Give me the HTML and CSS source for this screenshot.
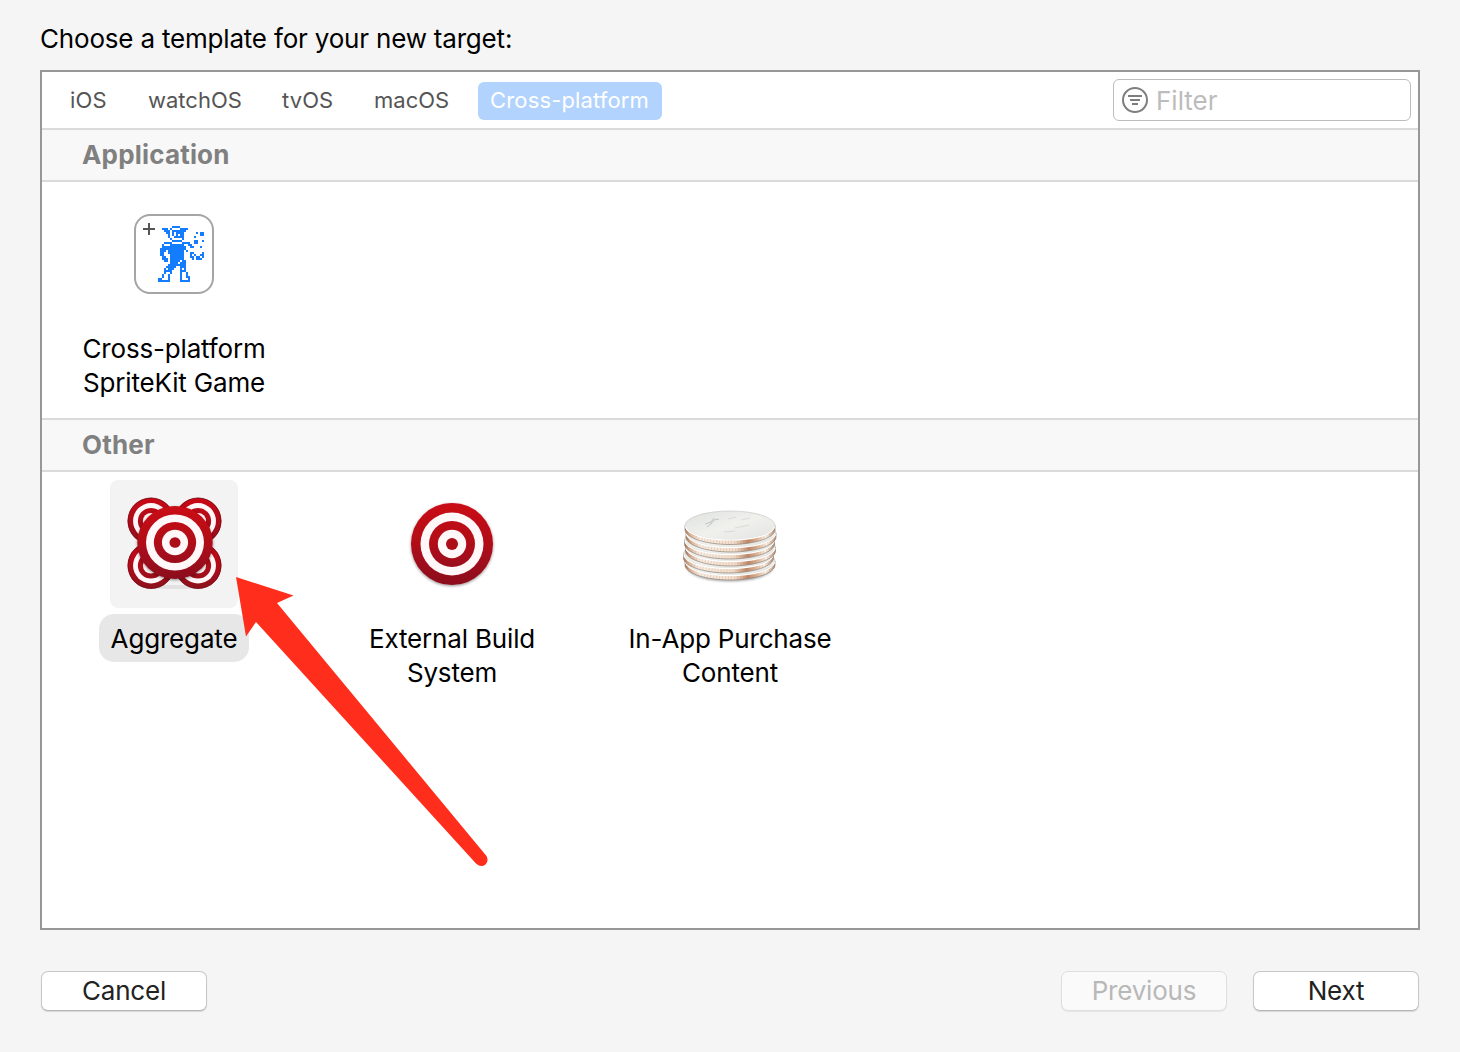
FILE: index.html
```html
<!DOCTYPE html>
<html lang="en">
<head>
<meta charset="utf-8">
<title>Choose a template</title>
<link rel="stylesheet" href="styles.css">
</head>
<body>
<main class="dialog">
  <h1 class="title">Choose a template for your new target:</h1>
  <section class="panel">
    <nav class="tabs">
      <span class="tab t-ios">iOS</span>
      <span class="tab t-watch">watchOS</span>
      <span class="tab t-tv">tvOS</span>
      <span class="tab t-mac">macOS</span>
      <span class="tab active">Cross-platform</span>
      <div class="filter">
        <svg width="26" height="26" viewBox="0 0 26 26" fill="none" stroke="#7e7e7e" stroke-width="2"><circle cx="13" cy="13" r="12"/><path d="M6 9h14M8 13h10M10 17h6"/></svg>
        <span>Filter</span>
      </div>
    </nav>
    <h2 class="section-title">Application</h2>
    <div class="grid applications">
      <div class="item">
        <div class="icon">
          <svg width="80" height="80" viewBox="0 0 80 80">
            <rect x="1" y="1" width="78" height="78" rx="15" fill="#fff" stroke="#a5a5a5" stroke-width="2"/>
            <path d="M9 15h12M15 9v12" stroke="#555" stroke-width="2"/>
            <g transform="translate(24 12) scale(2)" stroke="#147dff" stroke-width="1" fill="none" shape-rendering="crispEdges">
              <path d="M7 .5h4M2 1.5h3m1 0h1m4 0h4M3 2.5h3m1 0h7M4 3.5h2m1 0h1m1 0h4M5 4.5h1m1 0h1m1 0h1m1 0h2M5 5.5h1m2 0h5M6 6.5h1m5 0h1M7 7.5h5M3 8.5h4m5 0h4M2 9.5h1m3 0h7m2 0h2M2 10.5h12m2 0h1M1 11.5h13M1 12.5h3m1 0h8m1 0h1M1 13.5h2m2 0h8m3 0h2M1 14.5h2m3 0h7m3 0h1m1 0h1m2 0h2M2 15.5h2m2 0h7m3 0h2m1 0h2m1 0h1M2 16.5h3m1 0h7m4 0h1m1 0h3M3 17.5h2m1 0h5m1 0h2M6 18.5h4m1 0h3M5 19.5h9M4 20.5h5m2 0h3M3 21.5h1m1 0h3m3 0h1m1 0h1M3 22.5h4m4 0h3M3 23.5h1m2 0h1m4 0h1m2 0h1M2 24.5h1m2 0h1m5 0h1m2 0h1M2 25.5h1m2 0h1m5 0h1m2 0h2M0 26.5h2m3 0h1m5 0h1m3 0h1M0 27.5h6m5 0h5"/>
              <path d="M19 3.5h1m1 0h2M21 4.5h2M18 5.5h1M18 7.5h2m2 0h1M18 8.5h2M17 10.5h1m3 0h1M22 13.5h1"/>
            </g>
          </svg>
        </div>
        <div class="label tight"><span>Cross-platform</span><span>SpriteKit Game</span></div>
      </div>
    </div>
    <h2 class="section-title">Other</h2>
    <div class="grid others">
      <div class="item">
        <div class="icon selected">
          <svg width="128" height="128" viewBox="0 0 128 128">
            <defs>
              <linearGradient id="red" gradientUnits="userSpaceOnUse" x1="0" y1="-41" x2="0" y2="41"><stop stop-color="#cb0715"/><stop offset=".5" stop-color="#b00c19"/><stop offset="1" stop-color="#8b111d"/></linearGradient>
              <filter id="shadow" x="-20%" y="-20%" width="140%" height="140%"><feDropShadow dx="0" dy="1" stdDeviation="1.6" flood-opacity=".45"/></filter>
              <g id="target">
                <circle r="41" fill="url(#red)"/>
                <circle r="31.5" fill="#fff7f8"/>
                <circle r="23" fill="url(#red)"/>
                <circle r="14.2" fill="#fff7f8"/>
                <circle r="6" fill="#ad0c19"/>
              </g>
            </defs>
            <ellipse cx="64" cy="107" rx="31" ry="2" fill="#cfcfcf" opacity=".5"/>
            <use href="#target" transform="translate(41 41) scale(.57)"/>
            <use href="#target" transform="translate(88 41) scale(.57)"/>
            <use href="#target" transform="translate(41 85.5) scale(.57)"/>
            <use href="#target" transform="translate(88 85.5) scale(.57)"/>
            <g fill="none" stroke="#74101b" stroke-width=".8"><circle cx="41" cy="41" r="23"/><circle cx="88" cy="41" r="23"/><circle cx="41" cy="85.5" r="23"/><circle cx="88" cy="85.5" r="23"/></g>
            <g filter="url(#shadow)"><use href="#target" transform="translate(65 62.500) scale(.92 .89)"/></g>
          </svg>
        </div>
        <div class="label chosen tight"><span>Aggregate</span></div>
      </div>
      <div class="item">
        <div class="icon">
          <svg width="128" height="128" viewBox="0 0 128 128"><g filter="url(#shadow)"><use href="#target" transform="translate(64 64)"/></g></svg>
        </div>
        <div class="label tight"><span>External Build</span><span>System</span></div>
      </div>
      <div class="item">
        <div class="icon">
          <svg width="128" height="128" viewBox="0 0 128 128">
            <defs>
              <linearGradient id="edge"><stop stop-color="#a96f50"/><stop offset=".06" stop-color="#ddb294"/><stop offset=".16" stop-color="#f9eee3"/><stop offset=".55" stop-color="#f5dfcd"/><stop offset=".7" stop-color="#bd8464"/><stop offset=".8" stop-color="#e0b496"/><stop offset=".9" stop-color="#fff5ea"/><stop offset="1" stop-color="#b18467"/></linearGradient>
              <linearGradient id="face" x2="1" y2="1"><stop stop-color="#dfe1de"/><stop offset=".5" stop-color="#f0f1ed"/><stop offset="1" stop-color="#e3e4e1"/></linearGradient>
              <filter id="soft"><feGaussianBlur stdDeviation="1.3"/></filter>
              <g id="coin">
                <path d="M-45 0v4c0 8 20 15 45 15s45-7 45-15V0z" fill="url(#edge)" stroke="#8d8177" stroke-width=".7"/>
                <path d="M-40 9Q0 25 40 9" fill="none" stroke="#b9977d" stroke-width="3.500" stroke-dasharray="1 2" opacity=".3"/>
                <ellipse rx="45" ry="14.5" fill="url(#face)" stroke="#c7cac5" stroke-width=".7"/>
                <path d="M-44.5 1C-42 19 42 19 44.5 1" fill="none" stroke="#fff" stroke-width="1.2"/>
              </g>
            </defs>
            <ellipse cx="64" cy="87.500" rx="43" ry="14" fill="#777" filter="url(#soft)" opacity=".6"/>
            <use href="#coin" x="64" y="81"/>
            <use href="#coin" x="62.5" y="74"/>
            <use href="#coin" x="64.5" y="67"/>
            <use href="#coin" x="63.5" y="60"/>
            <use href="#coin" x="65" y="53"/>
            <use href="#coin" x="64" y="45.500"/>
            <path d="M39 44l6-2 3-4m-3 6 3-4 5-1m-12 8 5-4" fill="none" stroke="#b7bab5" stroke-width=".8"/>
            <path d="M62 39l8-2m5 3 9-2m-15 10 14-3m-25 7 11-1" fill="none" stroke="#d4d6d1" stroke-width=".8"/>
          </svg>
        </div>
        <div class="label tight"><span>In-App Purchase</span><span>Content</span></div>
      </div>
    </div>
  </section>
  <footer class="actions">
    <button class="button">Cancel</button>
    <button class="button previous" disabled>Previous</button>
    <button class="button">Next</button>
  </footer>
  <svg class="pointer" width="262" height="294" viewBox="0 0 262 294"><path d="M1 1 58.5 19.500 42 27 251.500 280Q254 285 250.500 288.500Q246 292 241 287.500L21 46 11 60.500z" fill="#ff2d1b"/></svg>
</main>
</body>
</html>
```
FILE: styles.css
```css
* { box-sizing: border-box; }
body { margin: 0; background: #f5f5f5; font-family: Inter, "Liberation Sans", sans-serif; color: #000; }
.dialog { position: relative; height: 1052px; padding: 0 40px; overflow: hidden; }
.title { margin: 0; height: 70px; padding-top: 23px; font-size: 26px; line-height: 32px; font-weight: 400; letter-spacing: -.19px; white-space: nowrap; }
.panel { height: 860px; border: 2px solid #979797; background: #fff; }
.tabs { height: 58px; padding: 0 7px 0 28px; display: flex; align-items: center; border-bottom: 2px solid #dadada; font-size: 22px; line-height: 38px; color: #555; white-space: nowrap; }
.t-ios { width: 78px; letter-spacing: .2px; }
.t-watch { width: 134px; }
.t-tv { width: 92px; letter-spacing: .1px; }
.t-mac { width: 104px; }
.tab.active { width: 184px; height: 38px; margin-top: 2px; padding-left: 12px; border-radius: 6px; background: #b2d3fd; color: #fff; line-height: 37px; letter-spacing: .15px; }
.filter { width: 298px; height: 42px; margin-left: auto; padding-left: 8px; display: flex; align-items: center; gap: 8px; border: 1px solid #bdbdbd; border-radius: 6px; color: #bcbcbc; font-size: 26px; line-height: 40px; }
.filter span { padding-top: 1px; }
.section-title { margin: 0; height: 52px; padding-left: 40px; background: #f8f8f8; border-bottom: 2px solid #dadada; color: #808080; font-size: 26px; line-height: 50px; font-weight: 700; letter-spacing: .18px; }
.grid { display: flex; gap: 14px; }
.applications { height: 238px; padding-top: 8px; border-bottom: 2px solid #dadada; }
.others { padding-top: 8px; }
.item { width: 264px; display: flex; flex-direction: column; align-items: center; }
.icon { width: 128px; height: 128px; display: flex; align-items: center; justify-content: center; border-radius: 8px; }
.icon.selected { background: #f3f3f3; }
.label { height: 82px; margin-top: 6px; padding-top: 8px; display: flex; flex-direction: column; align-items: center; font-size: 26px; line-height: 34px; white-space: nowrap; }
.label.tight { letter-spacing: -.17px; }
.label.chosen { width: 150px; height: 48px; border-radius: 15px; background: #e7e7e7; }
.actions { height: 122px; padding: 41px 1px 0; display: flex; gap: 26px; }
.button { width: 166px; height: 40px; padding: 0; font: inherit; font-size: 26px; line-height: 38px; letter-spacing: -.2px; color: #222; background: #fff; border: 1px solid #c8c8c8; border-bottom-color: #b5b5b5; border-radius: 7px; box-shadow: 0 1px 1px #00000020; }
.previous { margin-left: auto; color: #b8b8b8; background: #fafafa; border-color: #dedede; box-shadow: 0 1px 1px #00000010; }
.pointer { position: absolute; left: 235px; top: 576px; }
```
